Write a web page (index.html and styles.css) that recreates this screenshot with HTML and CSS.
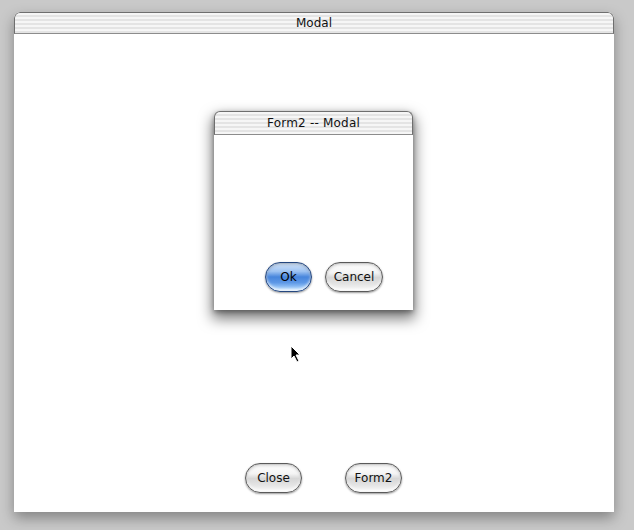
FILE: index.html
```html
<!DOCTYPE html>
<html>
<head>
<meta charset="utf-8">
<link rel="stylesheet" href="styles.css">
</head>
<body>
<div class="window">
  <div class="titlebar">Modal</div>
  <div class="content">
    <div class="dialog">
      <div class="titlebar small">Form2 -- Modal</div>
      <div class="dialog-body">
        <div class="btn-row">
          <button class="aqua default ok">Ok</button>
          <button class="aqua cancel">Cancel</button>
        </div>
      </div>
    </div>
    <svg class="cursor" width="12" height="18" viewBox="0 0 12 18">
      <path d="M1 1 L1 14 L4 11 L7 17 L9 16 L6 10 L10 10 Z" fill="#000" stroke="#fff" stroke-width="1"/>
    </svg>
    <div class="main-row">
      <button class="aqua wide">Close</button>
      <button class="aqua wide">Form2</button>
    </div>
  </div>
</div>
</body>
</html>
```
FILE: styles.css
```css
html, body {
  margin: 0;
  padding: 0;
}
body {
  width: 634px;
  height: 530px;
  background: #c9c9c9;
  padding: 12px 0 0 14px;
  box-sizing: border-box;
  font-family: "DejaVu Sans", "Liberation Sans", sans-serif;
  overflow: hidden;
}
.window {
  width: 600px;
  height: 500px;
  background: #fff;
  border-radius: 6px 6px 0 0;
  box-shadow: 0 6px 14px rgba(0,0,0,0.35);
  display: flex;
  flex-direction: column;
  overflow: hidden;
}
.titlebar {
  height: 22px;
  flex: none;
  border-top: 1px solid #6f6f6f;
  border-left: 1px solid #6f6f6f;
  border-right: 1px solid #6f6f6f;
  border-bottom: 1px solid #8c8c8c;
  border-radius: 6px 6px 0 0;
  box-sizing: border-box;
  background: repeating-linear-gradient(to bottom, #f6f6f6 0px, #f6f6f6 2px, #e4e4e4 2px, #e4e4e4 4px);
  text-align: center;
  font-size: 12px;
  line-height: 20px;
  color: #111;
}
.content {
  flex: 1;
  position: relative;
  display: flex;
  flex-direction: column;
  justify-content: flex-end;
  padding-bottom: 19px;
}
.main-row {
  display: flex;
  gap: 43px;
  padding-left: 231px;
}
.dialog {
  position: absolute;
  left: 200px;
  top: 77px;
  width: 199px;
  height: 199px;
  background: #fff;
  border-radius: 6px 6px 0 0;
  box-shadow: 0 7px 14px 2px rgba(0,0,0,0.5), 0 2px 5px rgba(0,0,0,0.35);
  display: flex;
  flex-direction: column;
}
.titlebar.small {
  height: 24px;
  line-height: 22px;
  letter-spacing: 0.2px;
}
.dialog-body {
  flex: 1;
  display: flex;
  flex-direction: column;
  justify-content: flex-end;
  padding-bottom: 18px;
}
.btn-row {
  display: flex;
  gap: 13px;
  padding-left: 51px;
}
.aqua {
  height: 30px;
  border-radius: 15px;
  border: 1px solid #5a5a5a;
  font-family: "DejaVu Sans", "Liberation Sans", sans-serif;
  font-size: 12px;
  color: #111;
  padding: 0;
  background: linear-gradient(to bottom, #ffffff 0%, #f4f4f4 35%, #d6d6d6 52%, #e4e4e4 75%, #fafafa 100%);
  box-shadow: 0 1px 2px rgba(0,0,0,0.4), inset 0 -2px 3px rgba(255,255,255,0.8), inset 0 2px 3px rgba(0,0,0,0.15), inset 0 0 0 1px rgba(0,0,0,0.08);
}
.wide { width: 57px; }
.ok { width: 47px; }
.cancel { width: 58px; }
.aqua.default {
  border-color: #25477f;
  background: linear-gradient(to bottom, #d5e6fb 0%, #9ec3f2 30%, #4785dc 50%, #5d98e6 70%, #a6d0fb 92%, #c6e2ff 100%);
  color: #000;
}
.cursor {
  position: absolute;
  left: 276px;
  top: 311px;
}
```
